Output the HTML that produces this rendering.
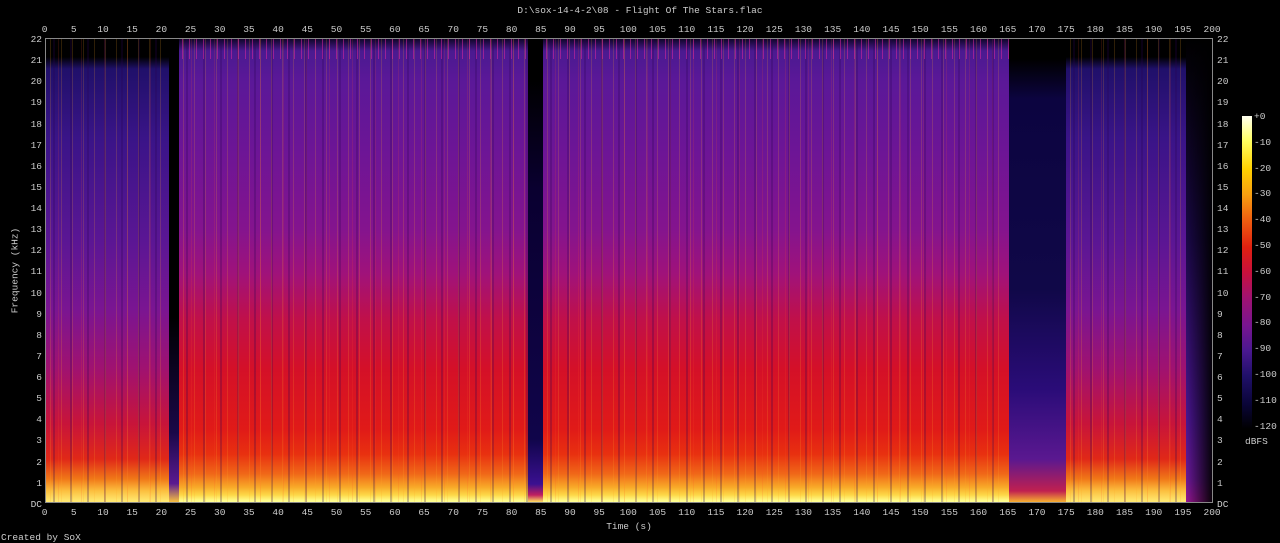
<!DOCTYPE html>
<html><head><meta charset="utf-8"><style>
body{margin:0;background:#000;width:1280px;height:543px;overflow:hidden;position:relative;font-family:"Liberation Mono","DejaVu Sans Mono",monospace;font-size:9.5px;color:#ccc}
.a{position:absolute}
#plot{left:45px;top:38px;width:1168px;height:465px;border:1px solid #888;box-sizing:border-box;background:#000;overflow:hidden}
.s{position:absolute;top:0;bottom:0}
.br{background:linear-gradient(180deg,#10052a 0px,#4a1a90 12px,#5a1898 40px,#6c1596 110px,#84148e 190px,#a0127a 235px,#c0104a 280px,#d41028 330px,#e01a18 390px,#e83010 415px,#f06818 435px,#f8a828 448px,#fdd848 456px,#ffff90 462px)}
.dm{background:linear-gradient(180deg,#000 0px,#000 18px,#20106a 30px,#3a1488 100px,#5a1694 200px,#7a1592 270px,#a01270 330px,#c8143a 385px,#e02818 420px,#f07818 440px,#fcc040 452px,#ffe870 462px)}
.st{position:absolute;inset:0;background:
repeating-linear-gradient(90deg,transparent 0 4px,rgba(255,170,40,.18) 4px 5px,transparent 5px 11px),
repeating-linear-gradient(90deg,transparent 0 7px,rgba(40,0,80,.25) 7px 9px,transparent 9px 17px),
repeating-linear-gradient(90deg,transparent 0 12px,rgba(255,80,40,.14) 12px 13px,transparent 13px 23px);}
.st2{position:absolute;left:0;right:0;top:0;height:20px;background:repeating-linear-gradient(90deg,transparent 0 3px,rgba(230,40,160,.5) 3px 4px,transparent 4px 7px)}
.row span{display:inline-block;width:29.2px;text-align:center}
.col div{height:21.136px;line-height:21px}
</style></head><body>
<div class="a" style="left:0;width:1280px;top:5px;text-align:center">D:\sox-14-4-2\08 - Flight Of The Stars.flac</div>
<div class="a row" style="left:30px;top:24px;white-space:nowrap"><span>0</span><span>5</span><span>10</span><span>15</span><span>20</span><span>25</span><span>30</span><span>35</span><span>40</span><span>45</span><span>50</span><span>55</span><span>60</span><span>65</span><span>70</span><span>75</span><span>80</span><span>85</span><span>90</span><span>95</span><span>100</span><span>105</span><span>110</span><span>115</span><span>120</span><span>125</span><span>130</span><span>135</span><span>140</span><span>145</span><span>150</span><span>155</span><span>160</span><span>165</span><span>170</span><span>175</span><span>180</span><span>185</span><span>190</span><span>195</span><span>200</span></div>
<div class="a row" style="left:30px;top:507px;white-space:nowrap"><span>0</span><span>5</span><span>10</span><span>15</span><span>20</span><span>25</span><span>30</span><span>35</span><span>40</span><span>45</span><span>50</span><span>55</span><span>60</span><span>65</span><span>70</span><span>75</span><span>80</span><span>85</span><span>90</span><span>95</span><span>100</span><span>105</span><span>110</span><span>115</span><span>120</span><span>125</span><span>130</span><span>135</span><span>140</span><span>145</span><span>150</span><span>155</span><span>160</span><span>165</span><span>170</span><span>175</span><span>180</span><span>185</span><span>190</span><span>195</span><span>200</span></div>
<div class="a col" style="left:20px;top:29px;width:22px;text-align:right"><div>22</div><div>21</div><div>20</div><div>19</div><div>18</div><div>17</div><div>16</div><div>15</div><div>14</div><div>13</div><div>12</div><div>11</div><div>10</div><div>9</div><div>8</div><div>7</div><div>6</div><div>5</div><div>4</div><div>3</div><div>2</div><div>1</div><div>DC</div></div>
<div class="a col" style="left:1217px;top:29px;width:22px"><div>22</div><div>21</div><div>20</div><div>19</div><div>18</div><div>17</div><div>16</div><div>15</div><div>14</div><div>13</div><div>12</div><div>11</div><div>10</div><div>9</div><div>8</div><div>7</div><div>6</div><div>5</div><div>4</div><div>3</div><div>2</div><div>1</div><div>DC</div></div>
<div class="a" style="left:-30px;top:265px;transform:rotate(-90deg);width:90px;text-align:center">Frequency (kHz)</div>
<div class="a" style="left:0;width:1258px;top:521px;text-align:center">Time (s)</div>
<div class="a" style="left:1px;top:532px">Created by SoX</div>
<div class="a" id="plot">
 <div class="s dm" style="left:0;width:123px"><div class="st"></div></div>
 <div class="s" style="left:123px;width:10px;background:linear-gradient(180deg,#000 60%,#1a0848 85%,#5a1a90 96%,#f8c040)"></div>
 <div class="s br" style="left:133px;width:349px"><div class="st"></div><div class="st2"></div></div>
 <div class="s" style="left:482px;width:15px;background:linear-gradient(180deg,#000 0,#000 40px,#0a0030 150px,#10054a 400px,#3a1090 445px,#c02060 456px,#ffe060 463px)"></div>
 <div class="s br" style="left:497px;width:466px"><div class="st"></div><div class="st2"></div></div>
 <div class="s" style="left:963px;width:57px;background:linear-gradient(180deg,#000 0,#000 20px,#0c0440 60px,#100848 250px,#2a0c78 350px,#5a1890 420px,#c02050 452px,#f8b030 463px)"></div>
 <div class="s dm" style="left:1020px;width:120px"><div class="st"></div></div>
 <div class="s" style="left:1140px;width:28px;background:linear-gradient(90deg,rgba(0,0,0,0),#000),linear-gradient(180deg,#000 0,#1a0848 200px,#4a1590 380px,#6a1898 440px,#9a1590 465px)"></div>
</div>
<div class="a" style="left:1242px;top:116px;width:10px;height:313px;background:linear-gradient(180deg,#fffff0 0%,#ffff60 8%,#ffd000 17%,#f8a010 25%,#f06010 33%,#e02010 42%,#c8103c 50%,#a01270 58%,#781590 67%,#4a1890 75%,#20106a 83%,#0a0538 92%,#000 100%)"></div>
<div class="a" style="left:1254px;top:104px;line-height:25.8px">+0<br>-10<br>-20<br>-30<br>-40<br>-50<br>-60<br>-70<br>-80<br>-90<br>-100<br>-110<br>-120</div>
<div class="a" style="left:1245px;top:436px">dBFS</div>
</body></html>
